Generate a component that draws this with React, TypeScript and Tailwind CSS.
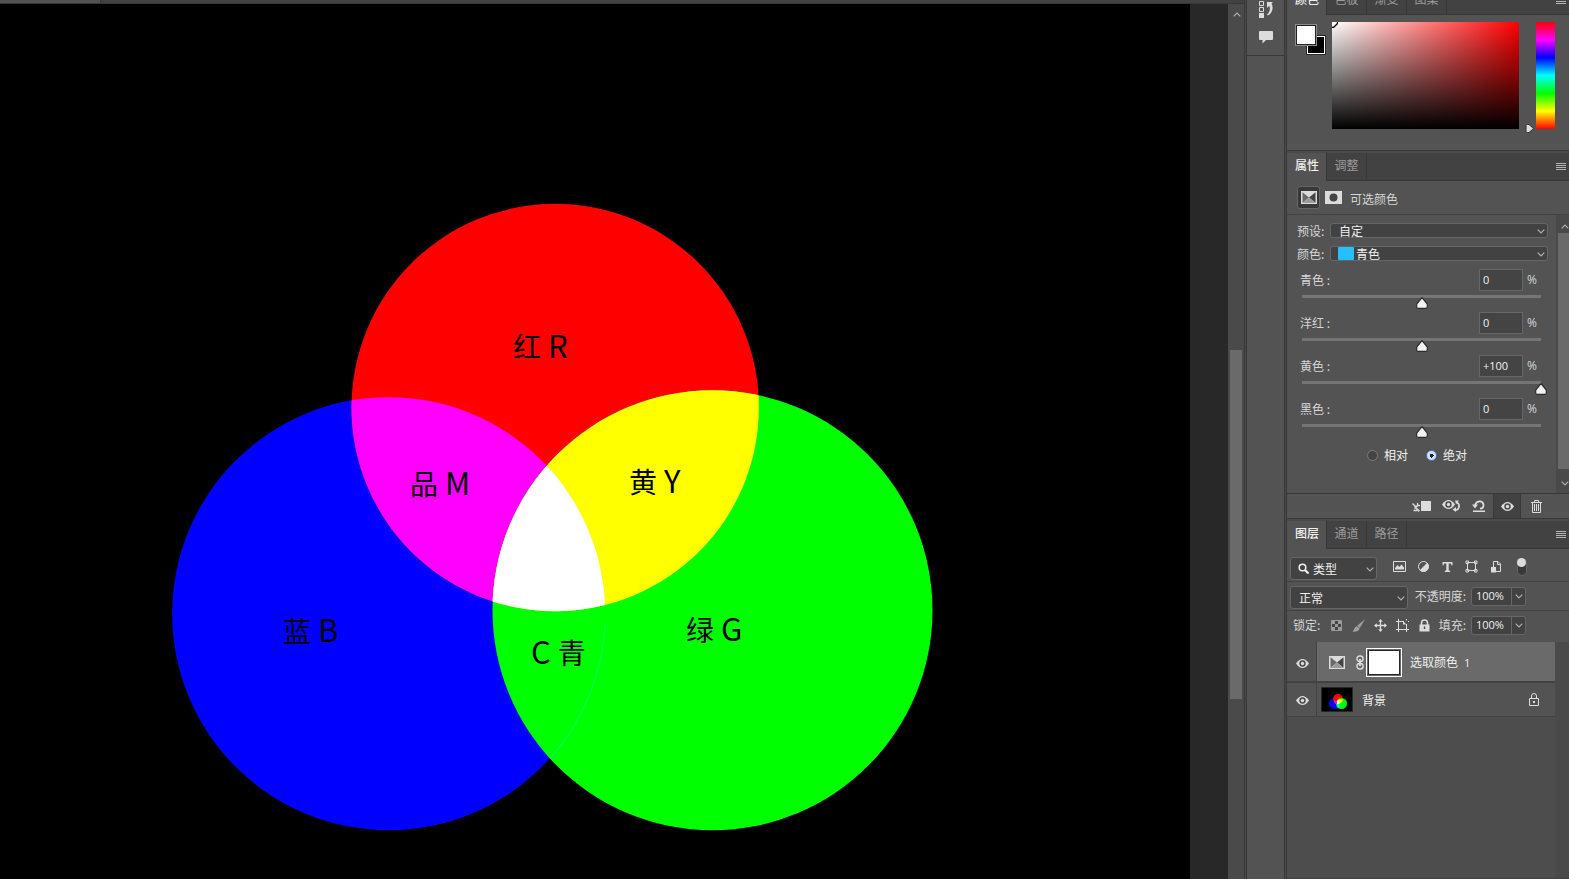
import { useState, type ReactNode } from "react";

const MenuIcon = () => (
  <svg width="10" height="8" viewBox="0 0 10 8" fill="#b4b4b4" shapeRendering="crispEdges">
    <path d="M0 0h10v1H0zM0 2h10v1H0zM0 4h10v1H0zM0 6h10v1H0z" />
  </svg>
);

const Chevron = ({ up = false }: { up?: boolean }) => (
  <svg width="8" height="5" viewBox="0 0 8 5" fill="none" stroke="#b0b0b0" strokeWidth="1.200" className="pointer-events-none shrink-0">
    <path d={up ? "M.7 4.300 4 1l3.300 3.300" : "M.7.7 4 4 7.300.7"} />
  </svg>
);

const EyeShape = () => (
  <>
    <path d="M0 4.500C2 1.500 4.200 0 6.500 0S11 1.500 13 4.500C11 7.500 8.800 9 6.500 9S2 7.500 0 4.500Z" fill="#dcdcdc" />
    <circle cx="6.500" cy="4.500" r="3.200" fill="#4a4a4a" />
    <circle cx="6.500" cy="4.500" r="1.700" fill="#dcdcdc" />
  </>
);

const Eye = () => (
  <svg width="13" height="9" viewBox="0 0 13 9"><EyeShape /></svg>
);

const SelectiveColorIcon = () => (
  <svg width="16" height="13" viewBox="0 0 16 13">
    <path d="M0 0h16v13H0z" fill="#dcdcdc" />
    <path d="M1.500 1.200v10.600L8 6.500z" fill="#6a6a6a" />
    <path d="M14.500 1.200v10.600L8 6.500z" fill="#444" />
    <path d="M1.500 12h13L8 6.500z" fill="#9a9a9a" />
  </svg>
);

function Tabs({ names }: { names: string[] }) {
  return (
    <div role="tablist" className="flex h-7 w-full shrink-0 bg-[#424242] text-xs leading-6">
      {names.map((n, i) => (
        <button
          key={n}
          role="tab"
          aria-selected={i === 0}
          className={
            i === 0
              ? "w-10 border-r border-[#383838] bg-[#535353] pb-1 pl-px font-medium text-[#f0f0f0]"
              : "w-10 border-r border-b border-[#383838] pb-1 text-[#9c9c9c]"
          }
        >
          {n}
        </button>
      ))}
      <div className="flex flex-1 items-center justify-end border-b border-[#383838] pr-[3px]">
        <button aria-label="面板菜单"><MenuIcon /></button>
      </div>
    </div>
  );
}

const diagramLabels = [
  { x: 513, y: 358, cjk: "红", latin: "R" },
  { x: 410, y: 495, cjk: "品", latin: "M" },
  { x: 629, y: 493, cjk: "黄", latin: "Y" },
  { x: 283, y: 642, cjk: "蓝", latin: "B" },
  { x: 686, y: 641, cjk: "绿", latin: "G" },
];

function Canvas() {
  return (
    <main className="flex min-w-0 flex-1 flex-col">
      <div className="flex h-1 shrink-0 border-b border-[#383838] bg-[#424242]">
        <div className="w-[101px] border-r border-[#383838] bg-[#535353]" />
      </div>
      <div className="flex min-h-0 flex-1 bg-[#282828]">
        <div className="min-w-0 flex-1 bg-black">
          <svg viewBox="0 4 1190 875" className="h-full w-full" preserveAspectRatio="xMidYMid slice">
            <defs>
              <clipPath id="blue"><circle cx="388.700" cy="613.700" r="216.500" /></clipPath>
              <clipPath id="green"><circle cx="712.500" cy="610.300" r="220" /></clipPath>
              <clipPath id="lower"><path d="M400 624h300v300H400z" /></clipPath>
            </defs>
            <circle cx="388.700" cy="613.700" r="216.500" fill="#00f" />
            <circle cx="555.200" cy="407.500" r="203.700" fill="#f00" />
            <g clipPath="url(#blue)"><circle cx="555.200" cy="407.500" r="203.700" fill="#f0f" /></g>
            <circle cx="712.500" cy="610.300" r="220" fill="#0f0" />
            <g clipPath="url(#green)">
              <g clipPath="url(#lower)">
                <circle cx="388.700" cy="613.700" r="216.500" fill="none" stroke="#00ff48" strokeWidth="1.300" />
              </g>
              <circle cx="555.200" cy="407.500" r="203.700" fill="#ff0" />
              <g clipPath="url(#blue)"><circle cx="555.200" cy="407.500" r="203.700" fill="#fff" /></g>
            </g>
            <g className="fill-black font-['Noto_Sans_CJK_SC',sans-serif] text-[28px]">
              {diagramLabels.map((l) => (
                <text key={l.latin} x={l.x} y={l.y}>
                  {l.cjk}
                  <tspan className="text-[31px]">{` ${l.latin}`}</tspan>
                </text>
              ))}
              <text x="531" y="664"><tspan className="text-[31px]">{"C "}</tspan>青</text>
            </g>
          </svg>
        </div>
        <div className="w-[38px] shrink-0" />
        <div className="flex w-4 shrink-0 flex-col items-center bg-[#4a4a4a]">
          <div className="flex h-5 items-center pl-px"><Chevron up /></div>
          <div className="flex w-3 flex-1 flex-col">
            <div className="basis-[326px]" />
            <div className="basis-[349px] bg-[#6a6a6a]" />
          </div>
        </div>
      </div>
    </main>
  );
}

const Gutter = () => <div className="w-[3px] shrink-0 border-x border-[#383838] bg-[#4a4a4a]" />;

function Dock() {
  return (
    <nav className="w-[37px] shrink-0 bg-[#535353]">
      <div className="flex h-14 flex-col items-center gap-3 border-b border-[#383838] pl-px">
        <button aria-label="历史记录">
          <svg width="15" height="18" viewBox="0 0 15 18" fill="none" stroke="#dcdcdc">
            <path d="M.5 1.500h4v4h-4zM.5 7.500h4v4h-4z" />
            <path d="M0 13h5v5H0z" fill="#dcdcdc" stroke="none" />
            <path d="M8 2h6l-1.500 1.500C14.500 7 14 12.500 9 15.500l-1-1c3-2.500 3.500-6 2.200-8.700L8 8z" fill="#dcdcdc" stroke="none" />
          </svg>
        </button>
        <button aria-label="注释">
          <svg width="14" height="14" viewBox="0 0 14 14" fill="#dcdcdc">
            <path d="M1 1h12a1 1 0 0 1 1 1v7a1 1 0 0 1-1 1H7l-3.500 3.500V10H1a1 1 0 0 1-1-1V2a1 1 0 0 1 1-1z" />
          </svg>
        </button>
      </div>
    </nav>
  );
}

function ColorPanel() {
  return (
    <section className="flex h-[151px] shrink-0 flex-col border-b border-[#383838] bg-[#535353]">
      <div className="flex h-[15px] shrink-0 items-end overflow-hidden">
        <Tabs names={["颜色", "色板", "渐变", "图案"]} />
      </div>
      <div className="flex pt-[7px] pl-2">
        <div className="relative mt-0.5 size-[31px]">
          <button aria-label="背景色" className="absolute right-0 bottom-0 size-5 border border-[#282828] bg-white p-px">
            <span className="block size-full bg-black" />
          </button>
          <button aria-label="前景色" className="absolute top-0 left-0 size-[22px] border border-[#8c8c8c] bg-[#222] p-px">
            <span className="block size-full bg-white" />
          </button>
        </div>
        <div className="ml-1.5 h-[107px] flex-1 overflow-hidden bg-[linear-gradient(to_top,#000,transparent),linear-gradient(to_right,#fff,#f00)]">
          <svg width="6" height="6" viewBox="0 0 6 6" fill="none" stroke="#000"><path d="M5.500 0v1.500L1.500 5.500H0" strokeWidth="1.300" /></svg>
        </div>
        <div className="flex w-[17px] items-end justify-end pr-px">
          <svg width="10" height="9" viewBox="0 0 10 9" className="-mb-1">
            <path d="M1 1.500Q1 .5 2.500.5H4l4.500 4L4 8.500H2.500Q1 8.500 1 7.500z" fill="#dcdcdc" stroke="#333" />
          </svg>
        </div>
        <div className="mr-3.5 h-[107px] w-[19px] bg-[linear-gradient(to_bottom,#f00,#f0f,#00f,#0ff,#0f0,#ff0,#f00)]" />
      </div>
    </section>
  );
}

function Dropdown({ id, label, value, swatch = false }: { id: string; label: string; value: string; swatch?: boolean }) {
  return (
    <div className="flex h-[23px] items-center pl-2.5">
      <label htmlFor={id} className="w-[33px] pt-px">{label}:</label>
      <div className="relative flex flex-1 items-center">
        <select
          id={id}
          className={
            swatch
              ? "h-[15px] w-full appearance-none rounded-[3px] border border-[#666] bg-[#424242] pl-[25px] leading-[13px] text-[#f0f0f0]"
              : "h-[15px] w-full appearance-none rounded-[3px] border border-[#666] bg-[#424242] pl-2 leading-[13px] text-[#f0f0f0]"
          }
        >
          <option>{value}</option>
        </select>
        {swatch && <span className="absolute left-2 h-[13px] w-4 rounded-[1px] bg-[#26bfff]" />}
        <span className="absolute right-[3px] flex pt-px"><Chevron /></span>
      </div>
    </div>
  );
}

function Slider({ label, initial }: { label: string; initial: number }) {
  const [v, setV] = useState(initial);
  return (
    <div className="h-[43px] pr-[15px] pl-[13px]">
      <div className="flex h-[22px] items-center">
        <label className="flex-1" htmlFor={label}>{label} :</label>
        <input
          aria-label={label}
          value={v > 0 ? `+${v}` : `${v}`}
          onChange={(e) => setV(Math.max(-100, Math.min(100, Number(e.target.value) || 0)))}
          className="h-[22px] w-11 border border-[#666] bg-[#444] pb-px pl-[3px] font-['Open_Sans',sans-serif] text-[11px] text-[#f0f0f0]"
        />
        <span className="w-[18px] pb-px pl-1 font-['Open_Sans',sans-serif] text-xs">%</span>
      </div>
      <div className="relative mt-1 ml-0.5 h-3.5">
        <div className="h-[3px] bg-[#757575]" />
        <span className="absolute top-0.5 -ml-1.5" style={{ left: `${(v + 100) / 2}%` }}>
          <svg width="12" height="12" viewBox="0 0 12 12">
            <path d="M6 .7 11.300 7v2.800q0 1.500-1.500 1.500H2.200Q.7 11.300.7 9.800V7z" fill="#f2f2f2" stroke="#2c2c2c" strokeWidth="1.200" />
          </svg>
        </span>
        <input id={label} type="range" min={-100} max={100} value={v} onChange={(e) => setV(Number(e.target.value))} className="absolute inset-0 w-full opacity-0" />
      </div>
    </div>
  );
}

function Radio({ label, on = false }: { label: string; on?: boolean }) {
  return (
    <label className="flex items-center gap-1.5 text-[#f0f0f0]">
      <input
        type="radio"
        name="method"
        defaultChecked={on}
        className="size-[11px] appearance-none rounded-full border border-[#7a7a7a] bg-[#444] checked:border-[#3d7fd9] checked:bg-[radial-gradient(circle,#222_0_2px,#d5e0ee_2px)]"
      />
      {label}
    </label>
  );
}

function PropertiesPanel() {
  return (
    <section className="flex h-[366px] shrink-0 flex-col border-b border-[#383838] bg-[#535353]">
      <Tabs names={["属性", "调整"]} />
      <div className="flex h-[34px] shrink-0 items-center border-b border-[#424242] pl-2.5">
        <button aria-label="可选颜色" className="flex size-[23px] items-center justify-center rounded-[3px] border border-[#666] bg-[#383838]">
          <SelectiveColorIcon />
        </button>
        <button aria-label="蒙版" className="ml-[5px]">
          <svg width="17" height="13" viewBox="0 0 17 13"><path d="M0 0h17v13H0z" fill="#dcdcdc" /><circle cx="8.500" cy="6.500" r="4" fill="#444" /></svg>
        </button>
        <h2 className="ml-2 pt-0.5">可选颜色</h2>
      </div>
      <div className="flex min-h-0 flex-1">
        <div className="flex-1 pt-1">
          <div className="pr-2">
            <Dropdown id="preset" label="预设" value="自定" />
            <Dropdown id="colour" label="颜色" value="青色" swatch />
          </div>
          <div className="mt-1">
            <Slider label="青色" initial={0} />
            <Slider label="洋红" initial={0} />
            <Slider label="黄色" initial={100} />
            <Slider label="黑色" initial={0} />
          </div>
          <div className="flex gap-[18px] pt-1.5 pl-20">
            <Radio label="相对" />
            <Radio label="绝对" on />
          </div>
        </div>
        <div className="flex w-[13px] flex-col overflow-hidden bg-[#4a4a4a] pl-0.5">
          <div className="flex h-[18px] items-center pt-1 pl-[3px]"><Chevron up /></div>
          <div className="flex-1 bg-[#6a6a6a]" />
          <div className="flex h-6 items-center pt-1 pl-[3px]"><Chevron /></div>
        </div>
      </div>
      <div className="flex h-[25px] shrink-0 items-center justify-end border-t border-[#383838] pr-[27px]">
        <button aria-label="剪切到图层">
          <svg width="19" height="12" viewBox="0 0 19 12">
            <path d="M9 1h10v10H9z" fill="#dcdcdc" />
            <path d="M.5 3.500 3 6M5.500 3v2.500H8M1.500 10.500H5" fill="none" stroke="#dcdcdc" strokeWidth="1.300" />
            <path d="M2.500 5.500H7L4.500 7.500 8 10.500 6.500 12 3.500 8.500 2.500 9.500z" fill="#dcdcdc" />
          </svg>
        </button>
        <button aria-label="查看上一状态" className="ml-[11px]">
          <svg width="19" height="12" viewBox="0 0 19 12">
            <EyeShape />
            <path d="M14.500 2.500c3.500 1 3.500 6 0 7.500h-2" fill="none" stroke="#dcdcdc" strokeWidth="1.700" />
            <path d="M13 .5h4l-3 3.500zM14 7v5l-3.500-2.500z" fill="#dcdcdc" />
          </svg>
        </button>
        <button aria-label="复位" className="ml-[11px]">
          <svg width="14" height="12" viewBox="0 0 14 12">
            <path d="M3 6.500C3.500 0 11.500 0 11.500 5c0 2.500-1.500 3.700-3.500 3.700" fill="none" stroke="#dcdcdc" strokeWidth="1.800" />
            <path d="M0 4.500h6L3 8.500zM1 10.500h12V12H1z" fill="#dcdcdc" />
          </svg>
        </button>
        <button aria-label="切换可见性" className="ml-[7px] flex h-6 w-7 items-center justify-center border-x border-[#383838] bg-[#424242]"><Eye /></button>
        <button aria-label="删除" className="ml-2.5">
          <svg width="11" height="13" viewBox="0 0 11 13" fill="none" stroke="#dcdcdc">
            <path d="M0 2.500h11M3.500 2.500v-2h4v2M1.500 3v9.500h8V3M3.500 4v7M5.500 4v7M7.500 4v7" />
          </svg>
        </button>
      </div>
    </section>
  );
}

function Percent({ id, label }: { id: string; label: string }) {
  return (
    <div className="mr-[43px] ml-auto flex items-center gap-[5px]">
      <label htmlFor={id}>{label}:</label>
      <div className="flex h-[19px] w-[55px] items-center rounded-[3px] border border-[#666] bg-[#424242]">
        <input id={id} defaultValue="100%" className="h-full w-10 border-r border-[#666] pb-px pl-1 font-['Open_Sans',sans-serif] text-[11px] text-[#f0f0f0]" />
        <button aria-label={`${label}选项`} className="flex flex-1 justify-center"><Chevron /></button>
      </div>
    </div>
  );
}

const filterIcons: [string, ReactNode][] = [
  ["像素图层", <><path d="M.5 1.500h12v10H.5z" fill="none" stroke="#dcdcdc" /><path d="M2 9.500V8l2.500-3 1.700 2L8.500 4.500 11 7.500v2z" fill="#dcdcdc" /></>],
  ["调整图层", <><circle cx="6.500" cy="6.500" r="5" fill="none" stroke="#dcdcdc" /><path d="M10.200 2.800A5.200 5.200 0 0 1 2.800 10.200z" fill="#dcdcdc" /></>],
  ["文字图层", <path d="M1.500 2h10v3.200h-1.200L10 3.500H7.700v7l1.500.3V12H3.800v-1.200l1.500-.3v-7H3l-.3 1.700H1.500z" fill="#dcdcdc" />],
  ["形状图层", <path d="M2.500 2.500h8v8h-8zM1 1h2.500v2.500H1zM9.500 1H12v2.500H9.500zM1 9.500h2.500V12H1zM9.500 9.500H12V12H9.500z" fill="#535353" stroke="#dcdcdc" />],
  ["智能对象", <><path d="M4.500 7V1.500h4.500l2.500 2.500v7.500H7M8.500 1.500V4.500h3" fill="none" stroke="#dcdcdc" /><path d="M2 7h5v5.500H2z" fill="#dcdcdc" /></>],
];

const lockIcons: [string, ReactNode][] = [
  ["锁定透明像素", <><path d="M1.500 1.500h10v10h-10z" fill="#444" stroke="#9a9a9a" /><path d="M2 2h3v3H2zM8 2h3v3H8zM5 5h3v3H5zM2 8h3v3H2zM8 8h3v3H8z" fill="#9a9a9a" /></>],
  ["锁定图像像素", <path d="M13 .3 7.800 9 5.200 6.800zM4.900 7.200l2.500 2.100c0 3-4 3.800-7 3.400C2.300 11.500 2 8 4.900 7.200z" fill="#a0a0a0" />],
  ["锁定位置", <><path d="M6.500 1v11M1 6.500h11" stroke="#dcdcdc" strokeWidth="1.300" /><path d="m6.500 0 2.200 2.800H4.300zM6.500 13 4.300 10.200h4.400zM0 6.500l2.800-2.200v4.400zM13 6.500l-2.800 2.200V4.300z" fill="#dcdcdc" /></>],
  ["锁定画板", <><path d="M2.500 0v13M0 2.500h8M0 10.500h13M10.500 13V5M10.500 0v1.500M12 2.500h1" stroke="#dcdcdc" fill="none" /><path d="M7 2v3.500h3.500z" fill="#dcdcdc" /></>],
  ["锁定全部", <><path d="M3.500 6V4a3 3 0 0 1 6 0v2" fill="none" stroke="#dcdcdc" strokeWidth="1.600" /><path d="M1.500 5.500h10v7h-10z" fill="#dcdcdc" /><path d="M5.800 7.500h1.400v2.500H5.800z" fill="#444" /></>],
];

function LayersPanel() {
  return (
    <section className="flex min-h-0 flex-1 flex-col border-b border-[#424242] bg-[#535353]">
      <Tabs names={["图层", "通道", "路径"]} />
      <div className="flex h-[33px] shrink-0 items-center border-b border-[#424242] pt-[3px] pl-[3px]">
        <div className="relative mt-1 flex h-[23px] w-[87px] items-center">
          <select aria-label="图层类型" className="h-full w-full appearance-none rounded-[3px] border border-[#666] bg-[#424242] pl-[22px] text-[#f0f0f0]"><option>类型</option></select>
          <svg width="11" height="11" viewBox="0 0 11 11" className="pointer-events-none absolute left-2" fill="none" stroke="#f0f0f0">
            <circle cx="4.500" cy="4.500" r="3.300" strokeWidth="1.500" /><path d="m7 7 3.500 3.500" strokeWidth="2.200" />
          </svg>
          <span className="absolute right-[3px] flex pt-px"><Chevron /></span>
        </div>
        <div className="ml-2.5 flex">
          {filterIcons.map(([name, icon]) => (
            <button key={name} aria-label={name} className="flex w-6 justify-center"><svg width="13" height="13" viewBox="0 0 13 13">{icon}</svg></button>
          ))}
        </div>
        <button aria-label="图层过滤开关" className="ml-2.5 h-[18px] w-2.5 rounded-full border border-[#666] bg-[#383838]">
          <span className="-mt-2 -ml-px block size-[9px] rounded-full bg-[#dcdcdc]" />
        </button>
      </div>
      <div className="flex h-[29px] shrink-0 items-center border-b border-[#424242] pl-[3px]">
        <div className="relative mt-[3px] flex h-[23px] w-[118px] items-center">
          <select aria-label="混合模式" className="h-full w-full appearance-none rounded-[3px] border border-[#666] bg-[#424242] pl-2 text-[#f0f0f0]"><option>正常</option></select>
          <span className="absolute right-[3px] flex pt-px"><Chevron /></span>
        </div>
        <Percent id="opacity" label="不透明度" />
      </div>
      <div className="flex h-[31px] shrink-0 items-center pb-[3px] pl-1.5">
        <span className="w-8">锁定:</span>
        <div className="flex">
          {lockIcons.map(([name, icon]) => (
            <button key={name} aria-label={name} className="flex w-[22px] justify-center"><svg width="13" height="13" viewBox="0 0 13 13">{icon}</svg></button>
          ))}
        </div>
        <Percent id="fill" label="填充" />
      </div>
      <div className="flex min-h-0 flex-1 bg-[#4a4a4a]">
        <ul className="mr-3.5 flex-1 bg-[#4d4d4d]">
          <li className="flex h-[41px] border-b-2 border-[#424242] bg-[#535353]">
            <button aria-label="显示选取颜色 1" className="flex w-[30px] items-center justify-center border-r border-[#424242] pt-1 pl-0.5"><Eye /></button>
            <div className="flex flex-1 items-center bg-[#6a6a6a] pt-0.5 pl-3">
              <SelectiveColorIcon />
              <svg width="8" height="15" viewBox="0 0 8 15" className="ml-[11px]" fill="none" stroke="#dcdcdc" strokeWidth="1.400">
                <rect x="1" y="1" width="6" height="5.500" rx="2.500" /><rect x="1" y="8.500" width="6" height="5.500" rx="2.500" /><path d="M4 4v7" strokeWidth="1.800" />
              </svg>
              <span className="ml-0.5 h-[29px] w-9 border border-white bg-[#6a6a6a] p-px"><span className="block size-full border border-[#282828] bg-white" /></span>
              <span className="ml-2 text-[#f0f0f0]">选取颜色<span className="ml-1.5 font-['Open_Sans',sans-serif] text-[11px]">1</span></span>
            </div>
          </li>
          <li className="flex h-[34px] border-b border-[#424242] bg-[#535353]">
            <button aria-label="显示背景" className="flex w-[30px] items-center justify-center border-r border-[#424242] pt-0.5 pl-0.5"><Eye /></button>
            <div className="flex flex-1 items-center pr-4 pl-1">
              <svg width="32" height="25" viewBox="0 0 32 25">
                <path d="M.5.5h31v24H.5z" stroke="#282828" />
                <circle cx="13.500" cy="16.500" r="5.500" fill="#00f" /><circle cx="17" cy="12" r="5" fill="#f00" />
                <circle cx="20.500" cy="16.500" r="5.500" fill="#0f0" />
                <path d="M13 13a5.500 5.500 0 0 1 4 4h-2.500z" fill="#f0f" />
                <path d="M17.500 12.500h4.500l-1 2.500-3 2z" fill="#ff0" /><path d="m16 14 2-1v4h-2z" fill="#fff" /><path d="M16 17h2.500v3l-1.500 1z" fill="#0ff" />
              </svg>
              <span className="ml-2 flex-1 pl-px text-[#f0f0f0]">背景</span>
              <svg width="10" height="13" viewBox="0 0 10 13" fill="none" stroke="#dcdcdc">
                <path d="M.5 5.500h9v7h-9zM2.500 5V3a2.500 2.500 0 0 1 5 0v2" /><path d="M4 8h2v2H4z" fill="#dcdcdc" stroke="none" />
              </svg>
            </div>
          </li>
        </ul>
      </div>
    </section>
  );
}

export default function App() {
  return (
    <div className="flex h-screen overflow-hidden bg-[#4a4a4a] font-['Noto_Sans_CJK_SC',sans-serif] text-xs text-[#d6d6d6]">
      <Canvas />
      <Gutter />
      <Dock />
      <Gutter />
      <aside className="flex w-[282px] shrink-0 flex-col gap-0.5">
        <ColorPanel />
        <PropertiesPanel />
        <LayersPanel />
      </aside>
    </div>
  );
}
